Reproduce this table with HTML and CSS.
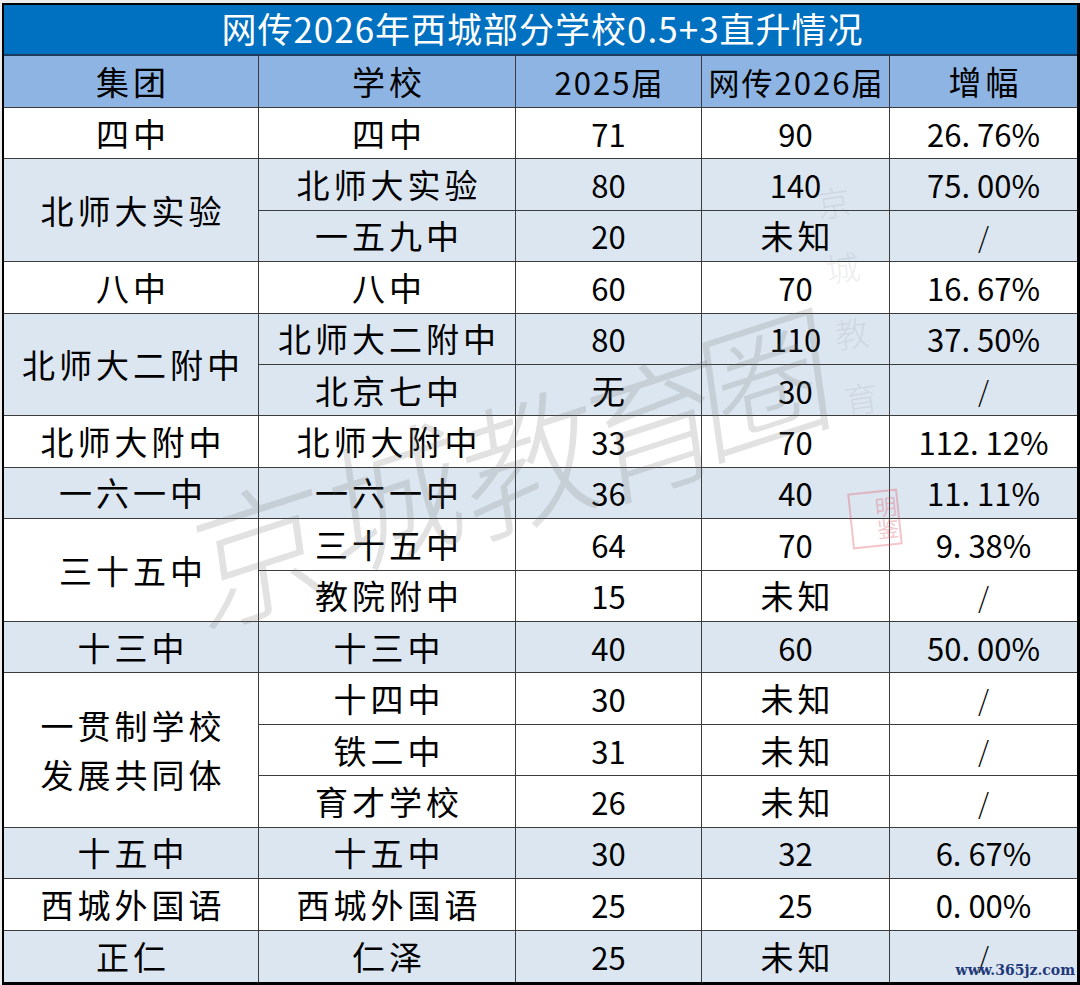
FILE: index.html
```html
<!DOCTYPE html>
<html lang="zh-CN">
<head>
<meta charset="utf-8">
<title>网传2026年西城部分学校0.5+3直升情况</title>
<link rel="stylesheet" href="styles.css">
</head>
<body>
<div class="sheet">
  <div class="grid">
    <div class="c title">网传2026年西城部分学校0.5+3直升情况</div>

    <div class="c hd">集团</div>
    <div class="c hd">学校</div>
    <div class="c hd tight">2025届</div>
    <div class="c hd tight">网传2026届</div>
    <div class="c hd last">增幅</div>

    <div class="c">四中</div>
    <div class="c">四中</div>
    <div class="c num">71</div>
    <div class="c num">90</div>
    <div class="c num last">26. 76%</div>

    <div class="c alt span2">北师大实验</div>
    <div class="c alt">北师大实验</div>
    <div class="c alt num">80</div>
    <div class="c alt num">140</div>
    <div class="c alt num last">75. 00%</div>
    <div class="c alt">一五九中</div>
    <div class="c alt num">20</div>
    <div class="c alt">未知</div>
    <div class="c alt last slash">/</div>

    <div class="c">八中</div>
    <div class="c">八中</div>
    <div class="c num">60</div>
    <div class="c num">70</div>
    <div class="c num last">16. 67%</div>

    <div class="c alt span2">北师大二附中</div>
    <div class="c alt">北师大二附中</div>
    <div class="c alt num">80</div>
    <div class="c alt num">110</div>
    <div class="c alt num last">37. 50%</div>
    <div class="c alt">北京七中</div>
    <div class="c alt">无</div>
    <div class="c alt num">30</div>
    <div class="c alt last slash">/</div>

    <div class="c">北师大附中</div>
    <div class="c">北师大附中</div>
    <div class="c num">33</div>
    <div class="c num">70</div>
    <div class="c num last">112. 12%</div>

    <div class="c alt">一六一中</div>
    <div class="c alt">一六一中</div>
    <div class="c alt num">36</div>
    <div class="c alt num">40</div>
    <div class="c alt num last">11. 11%</div>

    <div class="c span2">三十五中</div>
    <div class="c">三十五中</div>
    <div class="c num">64</div>
    <div class="c num">70</div>
    <div class="c num last">9. 38%</div>
    <div class="c">教院附中</div>
    <div class="c num">15</div>
    <div class="c">未知</div>
    <div class="c last slash">/</div>

    <div class="c alt">十三中</div>
    <div class="c alt">十三中</div>
    <div class="c alt num">40</div>
    <div class="c alt num">60</div>
    <div class="c alt num last">50. 00%</div>

    <div class="c span3 two">一贯制学校<br>发展共同体</div>
    <div class="c">十四中</div>
    <div class="c num">30</div>
    <div class="c">未知</div>
    <div class="c last slash">/</div>
    <div class="c">铁二中</div>
    <div class="c num">31</div>
    <div class="c">未知</div>
    <div class="c last slash">/</div>
    <div class="c">育才学校</div>
    <div class="c num">26</div>
    <div class="c">未知</div>
    <div class="c last slash">/</div>

    <div class="c alt">十五中</div>
    <div class="c alt">十五中</div>
    <div class="c alt num">30</div>
    <div class="c alt num">32</div>
    <div class="c alt num last">6. 67%</div>

    <div class="c">西城外国语</div>
    <div class="c">西城外国语</div>
    <div class="c num">25</div>
    <div class="c num">25</div>
    <div class="c num last">0. 00%</div>

    <div class="c alt bottom">正仁</div>
    <div class="c alt bottom">仁泽</div>
    <div class="c alt num bottom">25</div>
    <div class="c alt bottom">未知</div>
    <div class="c alt last bottom slash">/</div>
  </div>

  <div class="watermark" aria-hidden="true">
    <span class="wm w1">京</span><span class="wm w2">城</span><span class="wm w3">教</span><span class="wm w4">育</span><span class="wm w5">圈</span>
    <span class="sig">京城教育</span>
    <span class="seal">明鉴</span>
  </div>
  <div class="site">www.365jz.com</div>
</div>
</body>
</html>
```

FILE: styles.css
```css
html, body {
  margin: 0;
  padding: 0;
}
body {
  background: #ececec;
  width: 1080px;
  height: 985px;
  overflow: hidden;
  font-family: "Noto Sans CJK SC", "Noto Sans", sans-serif;
}
.sheet {
  position: relative;
  margin: 3px 0 0 2px;
  width: 1078px;
  height: 982px;
  box-sizing: border-box;
  border: 2px solid #000;
  border-right-width: 3px;
  border-bottom-width: 3px;
  background: #fff;
}
.grid {
  display: grid;
  grid-template-columns: 255px 257px 186px 188px 1fr;
  grid-template-rows: repeat(19, 1fr);
  height: 100%;
}
.c {
  display: flex;
  align-items: center;
  justify-content: center;
  box-sizing: border-box;
  border-right: 1px solid #3c3c3c;
  border-bottom: 1px solid #3c3c3c;
  font-size: 33px;
  letter-spacing: 4px;
  color: #000;
  background: #fff;
  white-space: nowrap;
  line-height: 1;
  padding-left: 4px;
}
.c.last { border-right: none; }
.c.bottom { border-bottom: none; }
.title {
  grid-column: 1 / -1;
  background: #0070c0;
  color: #fff;
  font-size: 35px;
  letter-spacing: 1px;
  border-right: none;
  border-bottom: 2px solid #1d3b5c;
  padding-bottom: 4px;
}
.hd {
  background: #8db4e2;
}
.hd.tight {
  font-size: 31px;
  letter-spacing: 2px;
  padding-left: 2px;
}
.alt {
  background: #dce6f1;
}
.num {
  letter-spacing: 0;
  font-size: 31px;
  padding-left: 0;
}
.slash {
  font-size: 28px;
  font-weight: 300;
}
.span2 { grid-row: span 2; }
.span3 { grid-row: span 3; }
.two {
  line-height: 1.5;
  text-align: center;
}

.watermark {
  position: absolute;
  inset: 0;
  pointer-events: none;
}
.wm {
  position: absolute;
  font-family: "Noto Sans CJK SC", sans-serif;
  font-weight: 300;
  font-size: 140px;
  line-height: 1;
  color: rgba(110, 110, 110, 0.2);
  transform: rotate(-18deg) skewX(-10deg);
}
.w1 { left: 185px; top: 470px; }
.w2 { left: 320px; top: 415px; }
.w3 { left: 455px; top: 380px; }
.w4 { left: 580px; top: 345px; }
.w5 { left: 690px; top: 300px; }
.sig {
  position: absolute;
  left: 828px;
  top: 180px;
  writing-mode: vertical-rl;
  font-size: 34px;
  letter-spacing: 32px;
  line-height: 1;
  font-weight: 300;
  color: rgba(120, 120, 120, 0.15);
  transform: rotate(-8deg);
}
.seal {
  position: absolute;
  left: 846px;
  top: 486px;
  width: 50px;
  height: 56px;
  box-sizing: border-box;
  border: 2px solid rgba(220, 90, 100, 0.35);
  color: rgba(220, 90, 100, 0.35);
  writing-mode: vertical-rl;
  font-size: 22px;
  line-height: 23px;
  text-align: center;
  transform: rotate(-6deg);
}
.site {
  position: absolute;
  right: 2px;
  bottom: 4px;
  font-family: "DejaVu Serif", serif;
  font-size: 14px;
  font-weight: bold;
  color: #1f3a7a;
  letter-spacing: 0;
}
```
